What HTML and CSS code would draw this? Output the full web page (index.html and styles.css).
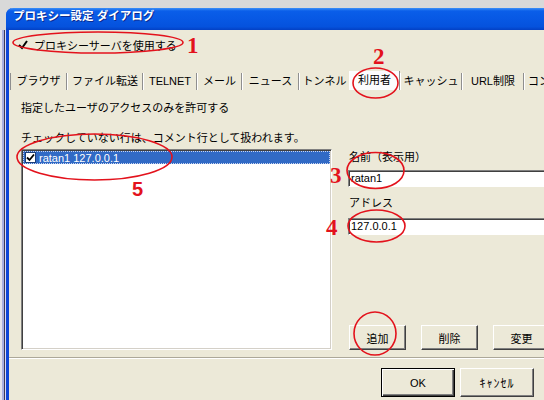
FILE: index.html
```html
<!DOCTYPE html>
<html lang="ja">
<head>
    <meta charset="UTF-8">
    <title>プロキシー設定 ダイアログ</title>
    <link rel="stylesheet" href="styles.css">
</head>
<body>
    <div class="desk">
        <div class="behind"></div>
        <div class="window">
            <div class="titlebar">プロキシー設定 ダイアログ</div>

            <div class="use-proxy">
                <svg class="tick" width="10" height="10" viewBox="0 0 10 10"><path d="M1 5 L4 8 L9 1" fill="none" stroke="#000" stroke-width="2"/></svg>
                <span>プロキシーサーバを使用する</span>
            </div>

            <div class="tabs">
                <div class="tab">ブラウザ</div>
                <div class="tab">ファイル転送</div>
                <div class="tab">TELNET</div>
                <div class="tab">メール</div>
                <div class="tab">ニュース</div>
                <div class="tab">トンネル</div>
                <div class="tab active">利用者</div>
                <div class="tab">キャッシュ</div>
                <div class="tab">URL制限</div>
                <div class="tab">コンテンツ</div>
            </div>

            <div class="page">
                <p class="note">指定したユーザのアクセスのみを許可する</p>
                <p class="note note-gap">チェックしていない行は、コメント行として扱われます。</p>

                <div class="split">
                    <div class="list">
                        <div class="row selected">
                            <span class="box">
                                <svg width="9" height="9" viewBox="0 0 9 9"><path d="M1 4.5 L3.5 7 L8 1.5" fill="none" stroke="#000" stroke-width="1.8"/></svg>
                            </span>
                            <span>ratan1 127.0.0.1</span>
                        </div>
                    </div>

                    <div class="form">
                        <div class="field-label">名前（表示用）</div>
                        <div class="input">ratan1</div>
                        <div class="field-label field-gap">アドレス</div>
                        <div class="input input-gap">127.0.0.1</div>
                        <div class="actions">
                            <button class="btn">追加</button>
                            <button class="btn">削除</button>
                            <button class="btn">変更</button>
                        </div>
                    </div>
                </div>
            </div>

            <div class="footer">
                <button class="btn btn-wide btn-default">OK</button>
                <button class="btn btn-wide btn-kana">ｷｬﾝｾﾙ</button>
            </div>
        </div>

        <svg class="marks" width="544" height="400" viewBox="0 0 544 400">
            <g fill="none" stroke="#e3121c" stroke-width="1.6">
                <ellipse cx="98" cy="42.5" rx="85" ry="10.5"/>
                <ellipse cx="375.5" cy="83" rx="22.5" ry="15"/>
                <ellipse cx="94.5" cy="157" rx="77.5" ry="23"/>
                <ellipse cx="375.5" cy="170.5" rx="28.5" ry="18"/>
                <ellipse cx="376.5" cy="226" rx="28.5" ry="16"/>
                <ellipse cx="375" cy="333.5" rx="21" ry="21.5"/>
            </g>
            <g class="num">
                <text x="187" y="53">1</text>
                <text x="373" y="64">2</text>
                <text x="330" y="183">3</text>
                <text x="326" y="235">4</text>
            </g>
            <text class="num-sans" x="132" y="196">5</text>
        </svg>
    </div>
</body>
</html>
```

FILE: styles.css
```css
body {
    margin: 0;
    font-family: "Liberation Sans", "Noto Sans CJK JP", sans-serif;
    font-size: 11px;
    color: #000;
    background-color: #d9d9d9;
    overflow: hidden;
}
.desk {
    position: relative;
    display: flex;
    align-items: flex-start;
    width: 544px;
    height: 400px;
    overflow: hidden;
}
.behind {
    flex: none;
    width: 6px;
    height: 370px;
    margin-top: 30px;
    background: linear-gradient(to right, #e4e4ec 0 2px, #a8b0e0 2px 4px, #3a3a5a 4px 5px, #dcdcf0 5px);
}
.window {
    flex: none;
    display: flex;
    flex-direction: column;
    width: 560px;
    height: 392px;
    margin-top: 8px;
    border-left: 3px solid #0d46d8;
    border-top-left-radius: 7px;
    background-color: #ece9d8;
}
.titlebar {
    height: 22px;
    box-sizing: border-box;
    margin-left: -3px;
    padding-left: 7px;
    line-height: 16px;
    font-size: 11.5px;
    border-top-left-radius: 7px;
    background: linear-gradient(to bottom, #3c8ff8 0, #0a5ee9 3px, #0758e4 50%, #0552dd 85%, #0340c4 100%);
    color: #ffffff;
    font-weight: bold;
    text-shadow: 1px 1px #0a2a90;
    white-space: nowrap;
}
.use-proxy {
    display: flex;
    align-items: center;
    height: 14px;
    margin-top: 8px;
    padding-left: 9px;
    white-space: nowrap;
}
.tick {
    margin-right: 6px;
}
.tabs {
    display: flex;
    align-items: flex-end;
    height: 18px;
    margin-top: 20px;
    padding-left: 1px;
    white-space: nowrap;
}
.tab {
    flex: none;
    box-sizing: border-box;
    height: 17px;
    line-height: 16px;
    text-align: center;
    border-left: 1px solid #ffffff;
    border-right: 1px solid #8f8f8f;
}
.tab:nth-child(1) { width: 57px; border-left-color: #8f8f8f; }
.tab:nth-child(2) { width: 76px; }
.tab:nth-child(3) { width: 54px; }
.tab:nth-child(4) { width: 45px; }
.tab:nth-child(5) { width: 57px; }
.tab:nth-child(6) { width: 50px; border-right: none; }
.tab:nth-child(7) { width: 51px; }
.tab:nth-child(8) { width: 62px; }
.tab:nth-child(9) { width: 62px; }
.tab:nth-child(10) { width: 60px; text-align: left; padding-left: 3px; }
.tab.active {
    height: 19px;
    line-height: 18px;
    background-color: #fcfcfe;
}
.page {
    height: 267px;
    box-sizing: border-box;
    padding: 11px 0 7px 12px;
    display: flex;
    flex-direction: column;
}
.note {
    margin: 0;
    line-height: 14px;
    white-space: nowrap;
}
.note-gap {
    margin-top: 16px;
}
.split {
    display: flex;
    height: 201px;
    margin-top: 4px;
}
.list {
    flex: none;
    width: 311px;
    box-sizing: border-box;
    border: 1px solid;
    border-color: #808080 #ffffff #ffffff #808080;
    box-shadow: inset 1px 1px #404040, inset -1px -1px #d4d0c8;
    background-color: #ffffff;
    padding: 1px 1px 0 1px;
}
.row {
    display: flex;
    align-items: center;
    height: 13px;
    white-space: nowrap;
}
.row.selected {
    background-color: #316ac5;
    color: #ffffff;
    outline: 1px dotted #c8d4f0;
    outline-offset: -1px;
}
.box {
    display: flex;
    align-items: center;
    justify-content: center;
    width: 11px;
    height: 11px;
    box-sizing: border-box;
    margin-left: 2px;
    margin-right: 3px;
    border: 1px solid #1c3f7a;
    background-color: #ffffff;
}
.form {
    flex: 1;
    display: flex;
    flex-direction: column;
    margin-left: 16px;
}
.field-label {
    margin-top: 1px;
    padding-left: 1px;
    line-height: 14px;
    white-space: nowrap;
}
.field-gap {
    margin-top: 9px;
}
.input {
    margin-top: 6px;
    height: 17px;
    box-sizing: border-box;
    padding-left: 2px;
    line-height: 15px;
    border: 1px solid;
    border-color: #808080 #ffffff #ffffff #808080;
    box-shadow: inset 1px 1px #404040;
    background-color: #ffffff;
}
.input-gap {
    margin-top: 8px;
}
.actions {
    display: flex;
    gap: 15px;
    margin-top: auto;
    padding-left: 1px;
}
.btn {
    flex: none;
    width: 57px;
    height: 25px;
    box-sizing: border-box;
    padding: 0;
    font: inherit;
    color: #000;
    background-color: #ece9d8;
    border: 1px solid;
    border-color: #ffffff #404040 #404040 #ffffff;
    box-shadow: inset -1px -1px #808080;
    white-space: nowrap;
}
.footer {
    flex: 1;
    display: flex;
    justify-content: flex-end;
    gap: 5px;
    padding: 10px 35px 0 0;
    border-top: 1px solid #aca899;
    box-shadow: inset 0 1px #ffffff;
}
.btn-wide {
    width: 74px;
    height: 29px;
}
.btn-kana {
    font-size: 12px;
    letter-spacing: 1px;
}
.btn-default {
    border: 1px solid #000000;
    box-shadow: inset 1px 1px #ffffff, inset -1px -1px #404040, inset -2px -2px #808080;
}
.marks {
    position: absolute;
    left: 0;
    top: 0;
    pointer-events: none;
}
.num text {
    font-family: "Liberation Serif", serif;
    font-weight: bold;
    font-size: 23px;
    fill: #e3121c;
}
.num-sans {
    font-family: "Liberation Sans", sans-serif;
    font-weight: bold;
    font-size: 20px;
    fill: #e3121c;
}
```
